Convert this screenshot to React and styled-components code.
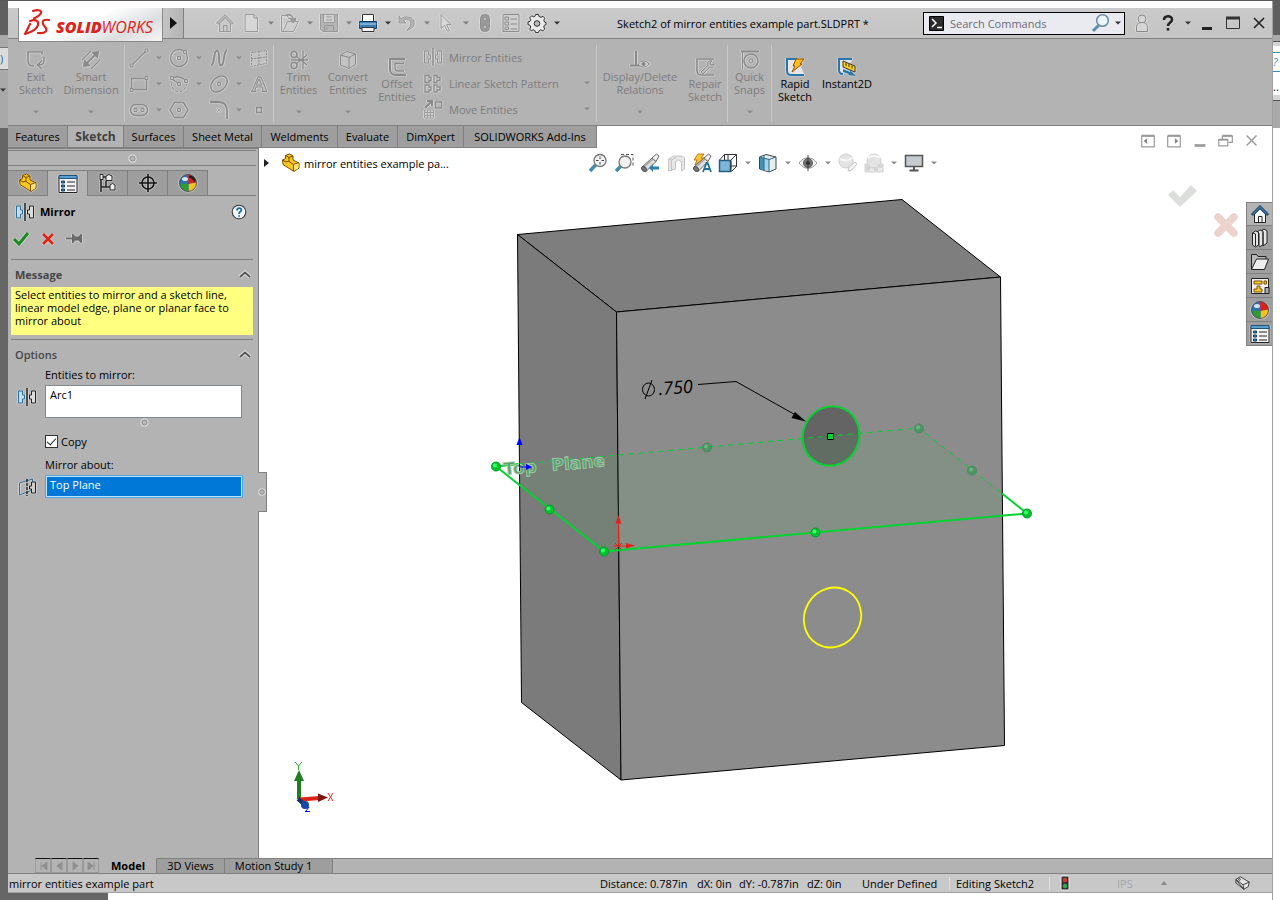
import React from "react";
import styled, { createGlobalStyle } from "styled-components";

const Global = createGlobalStyle`
  *, *::before, *::after { box-sizing: border-box; }
  body { margin: 0; background: #fff; }
  body, button, input, textarea {
    font-family: "Open Sans", "Noto Sans", sans-serif;
    font-size: 11px;
    line-height: 13px;
    color: #000;
  }
  button { border: 0; padding: 0; background: none; }
  svg { display: block; flex: none; }
`;

/* ---------- page frame ---------- */
const Desktop = styled.div`
  display: flex;
  min-height: 100vh;
  border-top: 1px solid #5a5a5a;
`;
const LeftEdge = styled.div`
  width: 8px;
  flex: none;
  display: flex;
  flex-direction: column;
  background: #666;
`;
const RightEdge = styled.div`
  width: 8px;
  flex: none;
  display: flex;
  flex-direction: column;
  overflow: hidden;
  background: #fff;
  border-left: 1px solid #a0a0a0;
`;
const Band = styled.div`
  height: ${(p) => p.$h}px;
  padding-top: ${(p) => p.$pt || 0}px;
  background: ${(p) => p.$bg};
  border-top: ${(p) => (p.$line ? `1px solid ${p.$line}` : "0")};
  color: ${(p) => p.$color || "#000"};
  overflow: hidden;
  flex: none;
`;
const Window = styled.div`
  flex: 1;
  min-width: 0;
  display: flex;
  flex-direction: column;
  padding-top: 7px;
`;

/* ---------- title bar ---------- */
const TitleBar = styled.header`
  display: flex;
  align-items: center;
  height: 31px;
  background: linear-gradient(#cacaca, #c4c4c4);
  border-bottom: 1px solid #808080;
`;
const LogoBox = styled.div`
  position: relative;
  z-index: 1;
  align-self: flex-start;
  width: 145px;
  height: 34px;
  margin-left: 10px;
  background: linear-gradient(155deg, #fff 20%, #fff 45%, #dcdee0 75%, #f4f4f4);
  border: 1px solid #8a8a8a;
  border-top: 0;
`;
const Flyout = styled.button`
  width: 21px;
  align-self: stretch;
  display: flex;
  align-items: center;
  padding-left: 6px;
  background: linear-gradient(90deg, #c4c4c4, #b4b4b4);
  border-right: 1px solid #808080;
`;
const QuickTools = styled.div`
  display: flex;
  align-items: center;
  margin-left: 28px;
`;
const IconButton = styled.button`
  width: 26px;
  height: 26px;
  display: flex;
  align-items: center;
  justify-content: center;
`;
const DropButton = styled.button`
  width: ${(p) => p.$w || 13}px;
  height: 26px;
  display: flex;
  align-items: center;
  justify-content: center;
`;
const DocTitle = styled.h1`
  flex: 1;
  margin: 0;
  font-size: 11px;
  font-weight: 400;
  line-height: 13px;
  text-align: center;
  white-space: nowrap;
`;
const Search = styled.label`
  display: flex;
  align-items: center;
  width: 202px;
  height: 23px;
  margin-right: 4px;
  padding: 0 0 0 5px;
  background: #e9ebf0;
  border: 1px solid #000;
`;
const SearchInput = styled.input`
  flex: 1;
  min-width: 0;
  padding: 0 6px;
  border: 0;
  outline: 0;
  background: none;
  &::placeholder { color: #6b6b74; opacity: 1; }
`;

/* ---------- ribbon ---------- */
const Ribbon = styled.div`
  display: flex;
  height: 87px;
  background: #b3b3b3;
  border-bottom: 1px solid #808080;
`;
const Group = styled.div`
  display: flex;
  margin: 6px 0 3px;
  padding-right: ${(p) => p.$pad || 0}px;
  border-right: ${(p) => (p.$last ? 0 : 1)}px solid #c9c9c9;
`;
const BigButton = styled.button`
  width: ${(p) => p.$w}px;
  display: flex;
  flex-direction: column;
  align-items: center;
  padding-top: ${(p) => (p.$low ? 12 : 5)}px;
  color: ${(p) => (p.$on ? "#000" : "#7d7d7d")};
  white-space: pre-line;
  text-align: center;
`;
const BigDrop = styled.span`
  margin-top: 14px;
`;
const SketchGrid = styled.div`
  display: grid;
  grid-template-columns: 40px 40px 40px 27px;
  grid-auto-rows: 26px;
  padding-left: 1px;
`;
const SketchCell = styled.div`
  display: flex;
  align-items: center;
`;
const RowList = styled.div`
  width: 175px;
`;
const RowButton = styled.button`
  display: flex;
  align-items: center;
  gap: 6px;
  width: 100%;
  height: 26px;
  padding: 0 6px 2px 2px;
  color: #7d7d7d;
  text-align: left;
`;
const RowText = styled.span`
  flex: 1;
`;

/* ---------- command tabs ---------- */
const TabRow = styled.div`
  display: flex;
  height: 22px;
  background: #fff;
`;
const TabStrip = styled.nav`
  display: flex;
  border-bottom: 1px solid #808080;
`;
const Tab = styled.button`
  width: ${(p) => p.$w}px;
  background: ${(p) => (p.$on ? "#b3b3b3" : "#9e9e9e")};
  border-right: 1px solid #808080;
  color: ${(p) => (p.$on ? "#404040" : "#000")};
  font-weight: ${(p) => (p.$on ? 700 : 400)};
  font-size: ${(p) => (p.$on ? 12 : 11)}px;
`;
const DocControls = styled.div`
  display: flex;
  margin: 2px 7px 0 auto;
`;

/* ---------- work area ---------- */
const Work = styled.div`
  flex: 1;
  display: flex;
  min-height: 600px;
`;
const Panel = styled.aside`
  position: relative;
  width: 251px;
  flex: none;
  background: #b3b3b3;
  border-right: 1px solid #808080;
`;
const Grip = styled.div`
  display: flex;
  align-items: center;
  justify-content: center;
  height: 16px;
  margin: 1px 2px 4px 0;
  border: solid #808080;
  border-width: 1px 0;
`;
const PanelTabs = styled.div`
  display: flex;
  margin-right: 2px;
  height: 26px;
  border-bottom: 1px solid #808080;
`;
const PanelTab = styled.button`
  width: 40px;
  height: ${(p) => (p.$on ? 26 : 25)}px;
  display: flex;
  align-items: center;
  justify-content: center;
  background: ${(p) => (p.$on ? "#b3b3b3" : "#9e9e9e")};
  border-top: 1px solid #808080;
  border-right: 1px solid #808080;
`;
const PanelHead = styled.div`
  display: flex;
  align-items: center;
  gap: 5px;
  height: 31px;
  padding: 0 11px 0 7px;
`;
const PanelTitle = styled.h2`
  flex: 1;
  margin: 0;
  font-size: 11px;
  line-height: 13px;
`;
const Actions = styled.div`
  display: flex;
  height: 33px;
  padding-top: 2px;
  margin: 0 5px 0 3px;
  border-bottom: 1px solid #808080;
`;
const ActionButton = styled.button`
  width: 27px;
  height: 20px;
  display: flex;
  justify-content: flex-start;
`;
const Section = styled.section`
  margin: 0 5px 0 3px;
`;
const SectionHead = styled.div`
  display: flex;
  align-items: center;
  justify-content: space-between;
  height: 27px;
  padding: 1px 2px 0 4px;
`;
const SectionTitle = styled.h3`
  margin: 0;
  font-size: 11px;
  line-height: 13px;
  font-weight: ${(p) => (p.$light ? 600 : 700)};
  color: #464646;
`;
const Message = styled.p`
  height: 48px;
  margin: 0 0 4px;
  padding: 1px 4px;
  background: #ffff80;
`;
const Rule = styled.hr`
  margin: 0;
  border: 0;
  border-top: 1px solid #808080;
`;
const Fields = styled.div`
  display: grid;
  grid-template-columns: 32px 198px;
  column-gap: 2px;
  justify-items: start;
  padding-top: 1px;
`;
const FieldLabel = styled.label`
  grid-column: 2;
  height: 17px;
`;
const FieldIcon = styled.div`
  justify-self: center;
  padding-top: 2px;
`;
const Selection = styled.textarea`
  width: 197px;
  height: 33px;
  padding: 2px 4px;
  resize: none;
  outline: 0;
  background: #fff;
  border: 1px solid #828790;
`;
const SelectionGrip = styled.div`
  grid-column: 2;
  justify-self: center;
  height: 17px;
`;
const Check = styled.label`
  grid-column: 2;
  display: flex;
  align-items: center;
  gap: 3px;
  height: 13px;
  margin-bottom: 10px;
`;
const Tick = styled.input`
  appearance: none;
  width: 13px;
  height: 13px;
  margin: 0;
  border: 1px solid #333;
  background: #fff;
  display: grid;
  place-content: center;
  &:checked::before {
    content: "";
    width: 9px;
    height: 5px;
    border: solid #222;
    border-width: 0 0 1px 1px;
    transform: rotate(-48deg);
    margin-top: -2px;
  }
`;
const ActiveSelection = styled.input`
  width: 198px;
  height: 23px;
  padding: 0 4px 4px;
  outline: 0;
  color: #fff;
  background: #0078d7;
  border: 1px solid #4fa8e0;
  box-shadow: inset 0 0 0 1px #bfe0f6;
`;
const PanelHandle = styled.button`
  position: absolute;
  left: 250px;
  top: 324px;
  z-index: 2;
  width: 9px;
  height: 40px;
  display: flex;
  align-items: center;
  justify-content: center;
  background: #b3b3b3;
  border: 1px solid #808080;
  border-left: 0;
`;

const Canvas = styled.main`
  position: relative;
  flex: 1;
  min-width: 0;
  background: #fff;
`;
const CanvasHead = styled.div`
  position: relative;
  z-index: 1;
  display: flex;
  align-items: center;
  height: 30px;
`;
const TreeItem = styled.button`
  display: flex;
  align-items: center;
  width: 326px;
  padding-left: 5px;
  text-align: left;
`;
const TreeText = styled.span`
  padding-left: 3px;
`;
const Expander = styled.span`
  width: 17px;
`;
const Scene = styled.svg`
  position: absolute;
  inset: 0;
  width: 100%;
  height: 100%;
`;
const TaskPane = styled.nav`
  position: absolute;
  right: 0;
  top: 54px;
  width: 26px;
  border: 1px solid #808080;
  border-right: 0;
`;
const TaskButton = styled.button`
  display: flex;
  align-items: center;
  justify-content: center;
  width: 25px;
  height: ${(p) => (p.$on ? 22 : 24)}px;
  background: ${(p) => (p.$on ? "#b3b3b3" : "#9e9e9e")};
  & + & { border-top: 1px solid #808080; }
`;

/* ---------- bottom bars ---------- */
const BottomTabs = styled.div`
  display: flex;
  height: 16px;
  background: #b3b3b3;
  border-bottom: 1px solid #808080;
`;
const NavButtons = styled.div`
  display: flex;
  width: 92px;
  padding-left: 27px;
`;
const NavButton = styled.button`
  width: 16px;
  display: flex;
  align-items: center;
  justify-content: center;
  border: 1px solid #9a9a9a;
  border-top-color: #111;
`;
const ViewTab = styled.button`
  width: ${(p) => p.$w}px;
  background: ${(p) => (p.$on ? "#b3b3b3" : "#9e9e9e")};
  font-weight: ${(p) => (p.$on ? 700 : 400)};
  border-right: 1px solid #808080;
  border-top: 1px solid ${(p) => (p.$on ? "#b3b3b3" : "#808080")};
  padding: 0 ${(p) => p.$pr || 0}px 3px 0;
`;
const TabFill = styled.div`
  flex: 1;
  border-top: 1px solid #808080;
`;
const StatusBar = styled.footer`
  display: flex;
  align-items: center;
  height: 19px;
  background: #c8c8c8;
  border-bottom: 1px solid #a0a0a0;
  white-space: nowrap;
`;
const StatusName = styled.span`
  flex: 1;
  padding-left: 1px;
`;
const StatusCell = styled.span`
  width: ${(p) => p.$w}px;
  padding-left: ${(p) => p.$pl || 0}px;
  border-right: ${(p) => (p.$bar ? 1 : 0)}px solid #dedede;
  color: ${(p) => (p.$dim ? "#a2a6aa" : "#000")};
`;
const Below = styled.div`
  height: 7px;
  background: #fff;
`;
const BelowDark = styled.div`
  width: 100px;
  height: 7px;
  background: #666;
`;

/* ---------- icons ---------- */
const HaloSvg = styled.svg`
  filter: ${(p) =>
    p.$halo
      ? "drop-shadow(1px 0 rgba(255,255,255,.3)) drop-shadow(-1px 0 rgba(255,255,255,.3)) drop-shadow(0 1px rgba(255,255,255,.2))"
      : "none"};
`;
const Ic = ({ children, s = 20, c = "#8a8a8a", halo, w = 1 }) => (
  <HaloSvg $halo={halo} width={s} height={s} viewBox="0 0 20 20" fill="none" stroke={c} strokeWidth={w} aria-hidden="true">
    {children}
  </HaloSvg>
);
const Caret = ({ c = "#7d7d7d" }) => (
  <svg width="6" height="4" viewBox="0 0 6 4" aria-hidden="true">
    <path d="M0 .5h6L3 3.500z" fill={c} />
  </svg>
);
const Ring = ({ s = 9 }) => (
  <svg width={s} height={s} viewBox="0 0 9 9" aria-hidden="true">
    <circle cx="4.500" cy="4.500" r="3.500" fill="#b0b0b0" stroke="#dadada" strokeWidth="1.500" />
    <circle cx="4.500" cy="4.500" r="2.500" fill="#b8b8b8" stroke="#8c8c8c" />
  </svg>
);
const Chevron = () => (
  <svg width="12" height="9" viewBox="0 0 12 9" fill="none" aria-hidden="true">
    <path d="M1 7l5-4.500 5 4.500" stroke="#ddd" strokeWidth="4" />
    <path d="M1 7l5-4.500 5 4.500" stroke="#555" strokeWidth="1.800" />
  </svg>
);
const Home = ({ dim }) => (
  <Ic halo={dim} c={dim ? "#999" : "#222"}>
    <path d="M4.500 10v8.500h11V10L10 4.500z" fill={dim ? "#c9c9c9" : "#f4f4f4"} />
    <path d="M8.500 18.500v-6h3.500v6M2 10.500l8-8 8 8" />
    <path d="M1.500 10L10 1.500l8.500 8.500-1.500 1.500-7-7-7 7z" fill={dim ? "#bbb" : "#3a78ac"} stroke={dim ? "#999" : "#153b5c"} />
  </Ic>
);
const Part = () => (
  <Ic c="#7a4a00" halo>
    <path d="M1.500 7l3-1.500V2.500l4-1.500 3.500 2v4l6 3v5l-5 3.500-11-7z" fill="#f8c81c" />
    <path d="M4.500 2.500L8 4.500v4l4.500 3 5.500-2M8 4.500L12 3M12.500 11.500V18M1.500 7L5 9l3-1" />
    <path d="M13 12l4.500-1.800V15L13 18z" fill="#fbe37a" stroke="none" />
  </Ic>
);
const MirrorIcon = ({ dim }) => (
  <Ic halo c={dim ? "#8e8e8e" : "#222"}>
    <path d="M1.500 4h4v4h2v4h-2v4h-4z" stroke={dim ? "#8e8e8e" : "#2a6f9f"} fill={dim ? "none" : "#c7dbe8"} />
    <path d="M18.500 4h-4v4h-2v4h2v4h4z" fill={dim ? "none" : "#ddd"} />
    <path d="M10 1v18" strokeWidth="1.500" />
  </Ic>
);
const MirrorAbout = () => (
  <Ic halo c="#222">
    <path d="M2.500 6l13-4v11l-13 5z" stroke="#2a6f9f" />
    <path d="M18.500 5h-4v4h-2v3h2v4h4z" fill="#ccc" />
    <path d="M10 2v17" strokeDasharray="3 1" strokeWidth="1.500" />
  </Ic>
);
const PropList = () => (
  <Ic c="#222" halo>
    <path d="M1 2.500h18v16H1z" fill="#f4f4f4" />
    <path d="M1 1.500h18v3H1z" fill="#5a9fce" stroke="#1c567f" />
    <path d="M3.500 7h3v2h-3zM3.500 11h3v2h-3zM3.500 15h3v2h-3z" fill="#3a86bd" stroke="#123d66" />
    <path d="M9 8h8M9 12h8M9 16h8" />
  </Ic>
);
const Ball = ({ mark }) => (
  <Ic c="none" halo>
    <circle cx="10" cy="10" r="8.500" fill="#2e6fb0" />
    <path d="M10 1.500a8.500 8.500 0 0 1 8.500 8l-8 1.500z" fill="#d9231c" />
    <path d="M18.500 9.500a8.500 8.500 0 0 1-8 9V11z" fill="#f4c321" />
    <path d="M1.500 10.500a8.500 8.500 0 0 0 9 8V11z" fill="#2f9a3a" />
    <ellipse cx="7" cy="6" rx="3" ry="2" fill="#cfe3f3" />
    {mark && <path d="M11 3c3-1 6 1 7 5l-2 1c-1-3-3-4-5-4z" fill="#222" />}
    <circle cx="10" cy="10" r="8.500" stroke="#444" strokeWidth=".8" />
  </Ic>
);
const PointSq = ({ x, y }) => <path d={`M${x - 1.5} ${y - 1.5}h3v3h-3z`} fill="#c6c6c6" />;
const Lens = ({ x = 12, y = 8 }) => (
  <>
    <path d={`M${x - 4} ${y + 4}L2 18`} stroke="#3f8fa8" strokeWidth="3.500" />
    <circle cx={x} cy={y} r="6" fill="#f1f1f1" stroke="#777" strokeWidth="1.300" />
  </>
);

const sketchTools = [
  ["Line", 1, <><path d="M3 17L17 3" strokeWidth="1.400" /><PointSq x={2.5} y={17.5} /><PointSq x={17.5} y={2.5} /></>],
  ["Circle", 1, <><circle cx="10" cy="10" r="8.500" strokeWidth="1.400" /><PointSq x={10} y={10} /><PointSq x={16} y={4} /></>],
  ["Spline", 1, <path d="M2 17.500c4 0 2-15 6-15s0 15 4 15 2-15 6-15" strokeWidth="2" />],
  ["Sketch picture plane", 0, <><path d="M2.500 4.500l15-2v13l-15 3z" strokeDasharray="2 1" fill="#c4c4c4" /><path d="M2 11l16-2M10 3v14" strokeDasharray="2 1" /></>],
  ["Rectangle", 1, <><path d="M2.500 4.500h15v11h-15z" strokeWidth="1.500" /><PointSq x={2.5} y={16} /><PointSq x={17.5} y={4} /></>],
  ["Arc", 1, <><path d="M3 4.500c4-3 9-2 14 2" strokeWidth="1.500" /><path d="M2.500 9c0 11 13 12 15 1" strokeDasharray="3 1.500" /><path d="M3 5l7 5" strokeWidth="1.500" /><PointSq x={3} y={4} /><PointSq x={10} y={10} /><PointSq x={17} y={7} /></>],
  ["Ellipse", 1, <><ellipse cx="10" cy="10" rx="9.500" ry="6.500" transform="rotate(-42 10 10)" strokeWidth="1.500" /><PointSq x={10} y={10} /></>],
  ["Text", 0, <path d="M2 17.500h5l-1-1.500 1-3h6l1 3-1 1.500h5L12 3H9L3.500 16zM7.500 11L10 5l2.500 6z" fill="#bdbdbd" />],
  ["Slot", 1, <><rect x="1.500" y="4.500" width="17" height="11" rx="5.500" strokeWidth="1.500" /><PointSq x={6.5} y={10} /><PointSq x={13.5} y={10} /></>],
  ["Polygon", 0, <><path d="M5.500 2.500h9L19 10l-4.500 7.500h-9L1 10z" strokeWidth="1.500" /><PointSq x={10} y={10} /></>],
  ["Fillet", 1, <><path d="M1 2h8c7 0 9 4 9 9v8" strokeWidth="1.800" /><path d="M8 8l4 4m0-4l-4 4" stroke="#a0a0a0" /></>],
  ["Point", 0, <path d="M7.500 7.500h5v5h-5z" fill="#c6c6c6" strokeWidth="1.300" />],
];

const icons = {
  exit: <path d="M16 4.500V2H2v9c0 4 2 5 5 5h1M18 7v4c0 3-2 4-6 4m4-4.500L11.500 15l4.500 4" strokeWidth="1.600" />,
  smart: <><path d="M1 10l9-9M10 19l9-9" strokeWidth="1.400" /><path d="M5 14L15 4" strokeWidth="1.800" /><path d="M2.500 16.500l1-6.500 5.500 5.500zM17.500 1.500l-6.500 1 5.500 5.500z" fill="#8a8a8a" /></>,
  trim: <><circle cx="5" cy="4.500" r="3" strokeWidth="1.600" /><circle cx="5" cy="15.500" r="3" strokeWidth="1.600" /><path d="M7 6l11 9M7 14l11-9M2 10h17M14 1v18" strokeWidth="1.300" /></>,
  convert: <><path d="M2.500 5L9 1.500 17.500 4v10.500L11 18.500 2.500 15z" fill="#c3c3c3" /><path d="M2.500 5L11 7.500 17.500 4M11 7.500v11" /></>,
  offset: <><path d="M18 2H3v10c0 5 2 6 6 6h10" strokeWidth="2" /><path d="M17 6.500H8V11c0 2 1 3 3 3h6" strokeWidth="1.300" /></>,
  relations: <><path d="M6 1v15M0 15.500h12" strokeWidth="2" /><path d="M8 14c3-4 8-4 11 0-3 4-8 4-11 0z" fill="#ccc" /><circle cx="13.500" cy="14" r="1.500" fill="#777" /></>,
  repair: <><path d="M18 3V2H2v11c0 4 1 5 5 5h12" strokeWidth="1.600" /><path d="M6 15l7-7c-1-3 1-5 4-4l-2 2 1 2 3-1c0 4-3 4-4 3l-7 7z" fill="#bbb" /></>,
  snaps: <><path d="M1 1.500h18" strokeWidth="2" /><path d="M2.500 2v17" /><circle cx="11" cy="11" r="7" strokeWidth="1.600" /><circle cx="11" cy="11" r="2" /></>,
};

const Bottle = ({ blue }) => (
  <>
    <path d="M2 14L12 5l4 3.500L6 18.500z" fill="#dedede" stroke="#666" />
    <path d="M12 5l4.500-4 2.500 2-3 5.500z" fill="#f2f2f2" stroke="#666" />
    <path d="M4 14l9-8" stroke="#aaa" strokeWidth="1.500" />
    <ellipse cx="4" cy="16" rx="2" ry="2.800" transform="rotate(-45 4 16)" fill="#777" stroke="#555" />
    {blue && <path d="M9 15l4-4v2.500h6v3h-6V19z" fill="#2f7fae" stroke="none" />}
  </>
);

const headsUp = [
  ["Zoom to fit", 0, <><Lens x={12} y={7.5} /><path d="M12 3.500v8M8 7.500h8" stroke="#444" strokeDasharray="2.500 3" /></>],
  ["Zoom to area", 0, <><path d="M7 1.500h12v12" stroke="#555" strokeDasharray="3 2" /><Lens x={11} y={9} /></>],
  ["Previous view", 0, <Bottle blue />],
  ["Section view", 0, <><path d="M2.500 6l5-3h9l2 2v11l-3 2V9l-3-2-3 2v7l-7 2z" fill="#e6e6e6" stroke="#c4c4c4" /><path d="M2.500 6l3 1v11M5.500 7l5-3" stroke="#c4c4c4" /></>],
  ["Dynamic annotation views", 0, <><Bottle /><path d="M6 1h6l-3 4h3L3 12l2-5H2z" fill="#ffc533" stroke="#a36400" strokeWidth=".8" /><path d="M11 19l3.500-9h1L19 19m-6.500-3h5" stroke="#1f6f9c" strokeWidth="1.800" /></>],
  ["View orientation", 1, <><path d="M1.500 7.500h11v11h-11z" fill="#7db6d8" stroke="#245f86" strokeWidth="1.500" /><path d="M1.500 7l5-5.500h12v12l-5 5M6.500 1.500V7M18.500 1.500l-6 6M10 2v5M13 13h6M13 7.500v11" stroke="#333" /></>],
  ["Display style", 1, <><path d="M1.500 4L8 1.500l10 2.500v12L11 19 1.500 16z" fill="#e6eef3" stroke="#444" /><path d="M2 4.500l4 1v12l-4-1.500z" fill="#3e94b9" stroke="none" /><path d="M6 5.500l5 1v12l-5-1.500z" fill="#a9d3e4" stroke="none" /><path d="M1.500 4L11 6.500 18 4M11 6.500V19M6 2.500V17" stroke="#2b6a88" /></>],
  ["Hide/show items", 1, <><path d="M1 10c5-7 13-7 18 0-5 7-13 7-18 0z" fill="#f3f3f3" stroke="#999" /><circle cx="10" cy="10" r="4.500" fill="#777" stroke="#555" /><circle cx="10" cy="10" r="2" fill="#222" stroke="none" /><path d="M10 2v16" stroke="#444" /></>],
  ["Edit appearance", 0, <><circle cx="8" cy="8" r="7" fill="#e3e3e3" stroke="#cfcfcf" /><path d="M2 6c4 2 9 2 12-1" stroke="#f6f6f6" strokeWidth="2" /><path d="M10 18l1-4 6-5 2 2-5 6z" fill="#f4f4f4" stroke="#c4c4c4" /></>],
  ["Apply scene", 1, <><path d="M1 11h18v8H1z" fill="#e9e9e9" stroke="#cfcfcf" /><circle cx="10" cy="8" r="7" fill="#e3e3e3" stroke="#cfcfcf" /><path d="M4 5c3-3 9-3 12 0" stroke="#f8f8f8" strokeWidth="2" /><path d="M2 12h4v3H2zM10 15h4v3h-4zM6 15H2v3h4zM14 12h4v3h-4z" fill="#d4d4d4" stroke="none" /></>],
  ["View settings", 1, <><path d="M1.500 2.500h17v11h-17z" fill="#c4cacd" stroke="#555" strokeWidth="1.500" /><path d="M10 14v3M5.500 17.500h9" stroke="#555" strokeWidth="2" /></>],
];

const quickTools = [
  ["Home", 0, <Home dim />],
  ["New", 1, <Ic halo c="#999"><path d="M4 1.500h9l3.500 3.500v13.500H4zM13 1.500V5h3.500" fill="#d6d6d6" /></Ic>],
  ["Open", 1, <Ic halo c="#999"><path d="M1.500 2.500h6l1 3h7v3M1.500 2.500v16h12l5-10h-11l-4 9" fill="#cfcfcf" /><path d="M6 2c5-1 7 1 7 5m-3-2l3 4 3-4" strokeWidth="1.800" /></Ic>],
  ["Save", 1, <Ic halo c="#999"><path d="M1.500 1.500h17v17H4l-2.500-2z" fill="#b5b5b5" /><path d="M4.500 1.500h11v8h-11z" fill="#d2d2d2" /><path d="M5.500 12.500h9v6h-9zM7 4h6M7 7h6M8 14v3" /></Ic>],
  ["Print", 1, <Ic halo c="#123f66"><path d="M4.500 1.500h11v7h-11z" fill="#fff" stroke="#333" /><path d="M1.500 8.500h17v7h-17z" fill="#3a7fb5" /><path d="M1.500 11h17" stroke="#bfe0f3" /><path d="M4 14.500h12v4H4z" fill="#f4f4f4" stroke="#333" /></Ic>, "#333"],
  ["Undo", 1, <Ic halo c="#999"><path d="M2 3v7h7L6.500 7.500c4-3 9 0 6.500 6l-3 4c8-2 9-9 5-12-4-2.500-8-2-11 .5z" fill="#b4b4b4" /></Ic>],
  ["Select", 1, <Ic halo c="#999"><path d="M5 1.500v14l3.500-3 3 6 2-1-3-6H15z" fill="#d6d6d6" /></Ic>],
  ["Rebuild", 0, <Ic halo c="#8c8c8c"><rect x="5.500" y="1.500" width="9" height="17" rx="4" fill="#9a9a9a" /><circle cx="10" cy="6" r="2" fill="#bbb" /><circle cx="10" cy="14" r="2" fill="#bbb" /></Ic>],
  ["File properties", 0, <Ic halo c="#8c8c8c"><path d="M2 1.500h16v17H2zM4 4h3.500v3H4zM4 9h3.500v3H4zM4 14h3.500v2.500H4zM9.500 6H16M9.500 11H16M9.500 16H16" fill="#cfcfcf" /></Ic>],
  ["Options", 1, <Ic halo c="#2a2a2a"><path d="M8.500 1.500h3l.5 2 2 .8 2-1 1.800 2-1 1.800.8 2 1.500.5v2l-1.700.7-.6 1.700 1 2-2 1.900-2-1-1.600.7-.7 2h-3l-.6-2-1.700-.8-2 1L2.700 16l1-2-.8-1.700-1.900-.7V9l2-.6.7-1.800-1-1.800 2-2 2 1 1.300-.6z" fill="#e9e9e9" /><circle cx="10" cy="10.500" r="2.800" fill="#bbb" /></Ic>, "#333"],
];

const docIcons = [
  ["Collapse left", <><path d="M3 4.500h14v12H3z" /><path d="M3 4h14" strokeWidth="2" /><path d="M9 7v6l-4-3z" fill="#888" stroke="none" /></>],
  ["Collapse right", <><path d="M3 4.500h14v12H3z" /><path d="M3 4h14" strokeWidth="2" /><path d="M11 7v6l4-3z" fill="#888" stroke="none" /></>],
  ["Minimize document", <path d="M4 15h12" strokeWidth="3" />],
  ["Restore document", <><path d="M2 8.500h10v7H2zM6 8V4.500h11v7h-4" /><path d="M2 8.500h10M6 4h11" strokeWidth="2" /></>],
  ["Close document", <path d="M4 4l11 11M15 4L4 15" strokeWidth="1.500" />],
];

const taskIcons = [
  ["SOLIDWORKS Resources", <Home />],
  ["Design Library", <Ic c="#222"><path d="M2.500 5l3-2 3 1v13l-3 2-3-2zM7 4l3-2 3 1v14l-4 2M11 3l3-2 3 2v12l-4 3M2.500 5l3 1v12M9 5v13M13 4v14" fill="#e4e4e4" /></Ic>],
  ["File Explorer", <Ic c="#222"><path d="M1.500 17V2.500h5l1.500 2h8V7" fill="#bbb" /><path d="M1.500 17.500L6.500 7h12l-4 10.500z" fill="#eee" /></Ic>],
  ["View Palette", <Ic c="#222"><path d="M1.500 2.500h17v15h-17z" fill="#eee" /><path d="M4 5h8v3H4zM14 5h2.500v3H14zM7 10h3v3h2v3H4v-3h3z" fill="#f7c832" stroke="#7a5200" /><path d="M15 11.500h4v6h-4z" fill="#aaa" /></Ic>],
  ["Appearances", <Ball />],
  ["Custom Properties", <PropList />],
];

const Sphere = ({ x, y, faint }) => (
  <g opacity={faint ? 0.6 : 1}>
    <circle cx={x} cy={y} r="4.500" fill={faint ? "#2a9a4e" : "#00c52f"} stroke={faint ? "#2c7f4a" : "#079a26"} />
    <circle cx={x - 1} cy={y - 1} r="2" fill={faint ? "#63c885" : "#3dff6a"} />
  </g>
);

const Model = () => (
  <Scene viewBox="259 148 1013 710" fill="none" role="img" aria-label="Part model with mirrored sketch circle">
    <g stroke="#000" strokeWidth="1" strokeLinejoin="round">
      <path d="M517.500 234.500L902 199.500l98.500 77.500L616.500 312z" fill="#7e7e7e" />
      <path d="M517.500 234.500l99 77.500 4.500 468-99.500-77.500z" fill="#7b7b7b" />
      <path d="M616.500 312l384-35 4 468.500L621 780z" fill="#8c8c8c" />
    </g>
    <ellipse cx="831" cy="436" rx="28" ry="30" transform="rotate(25 831 436)" fill="#646464" />
    <path d="M519 464l400-36 83 65v22l-398 36-85-67z" fill="rgb(70,170,80)" fillOpacity=".11" />
    <ellipse cx="831" cy="436" rx="28" ry="30" transform="rotate(25 831 436)" stroke="#00d42f" strokeWidth="2" />
    <g stroke="#00d42f">
      <path d="M519 464l400-36 84 66" strokeDasharray="5 5" />
      <path d="M519 464l-23 2.500 108 85 423-38-25-20" strokeWidth="2" />
    </g>
    <g fontFamily="DejaVu Sans, sans-serif" fontSize="17" fontWeight="700" fill="#5aa56d" stroke="#a9cdb1" strokeWidth=".8">
      <text x="504" y="475" transform="rotate(-5 504 475)">Top</text>
      <text x="552" y="471" transform="rotate(-5 552 471)">Plane</text>
    </g>
    <path d="M519.500 467v-24M519 467h8" stroke="#00f" strokeDasharray="24 2" />
    <path d="M516.500 445l3-8 3 8zM526 464l6 3-6 3z" fill="#00f" />
    <path d="M618.500 546v-24M614 546h12M615 543l7 7M622 543l-7 7" stroke="#e0231a" />
    <path d="M615.500 523.500l3-8 3 8zM626 543l9 2.500-9 3z" fill="#e0231a" />
    <Sphere x={496} y={466.5} />
    <Sphere x={549.5} y={509.5} />
    <Sphere x={604} y={551.5} />
    <Sphere x={815.5} y={532.5} />
    <Sphere x={1027} y={513.5} />
    <Sphere x={707} y={447.5} faint />
    <Sphere x={919} y={428.5} faint />
    <Sphere x={972} y={470.5} faint />
    <path d="M827.500 433.500h6v6h-6z" fill="#00d42f" stroke="#000" />
    <ellipse cx="832.500" cy="617.500" rx="28" ry="30.500" transform="rotate(30 832.500 617.500)" stroke="#ff0" strokeWidth="1.800" />
    <path d="M698 384.500l38-3 64 36" stroke="#000" />
    <path d="M806 421.500l-14.500-3.500 3.500-6z" fill="#000" />
    <ellipse cx="648.500" cy="389.500" rx="6" ry="6.500" stroke="#000" />
    <path d="M645 399l7-19" stroke="#000" />
    <text x="659" y="395" transform="rotate(-4 659 395)" fontFamily="Open Sans, sans-serif" fontSize="18" fontStyle="italic" fontWeight="500" fill="#000">.750</text>
    <path d="M1168 195l5-5 7 7 11-12 6 6-17 16z" fill="#dcdedc" />
    <path d="M1218 217l16 16M1234 217l-16 16" stroke="#ecd3cc" strokeWidth="7.500" strokeLinecap="round" />
    <path d="M299 799v-20" stroke="#1f7d22" strokeWidth="4" />
    <path d="M294 781l5-11 5 11z" fill="#1f7d22" />
    <path d="M300 799.500l20-1.500" stroke="#dd2414" strokeWidth="4" />
    <path d="M318 793.500l10 4-10 4.500z" fill="#7e150c" />
    <path d="M298 799l7 6" stroke="#12316b" strokeWidth="4" />
    <circle cx="305" cy="805" r="4" fill="#1546a8" />
    <path d="M295 762l3.500 4v4M302 762l-3.500 4" stroke="#2da02f" />
    <path d="M328 793l5 8M333 793l-5 8" stroke="#e0231a" />
    <path d="M305 811.500h5M309 807l-3 4" stroke="#00f" />
  </Scene>
);

const Big = ({ w, low, on, icon, text, drop, children }) => (
  <BigButton type="button" $w={w} $low={low} $on={on}>
    {children || <Ic halo>{icons[icon]}</Ic>}
    <span>{text}</span>
    {drop && <BigDrop><Caret c="#8c8c8c" /></BigDrop>}
  </BigButton>
);

export default function App() {
  return (
    <>
      <Global />
      <Desktop>
        <LeftEdge>
          <Band $h={34} $bg="#5f5f5f" />
          <Band $h={12} $bg="#a9a9a9" />
          <Band $h={22} $pt={4} $bg="#dcdcdc" $line="#777" $color="#2a6592">)</Band>
          <Band $h={59} $pt={18} $bg="#a9a9a9" $line="#777"><Caret c="#333" /></Band>
        </LeftEdge>
        <Window>
          <TitleBar>
            <LogoBox>
              <svg width="143" height="33" viewBox="0 0 143 33" role="img" aria-label="SOLIDWORKS">
                <g fill="none" stroke="#dc241c" strokeWidth="2.200" strokeLinecap="round" strokeLinejoin="round">
                  <path d="M14 3c6-2 9 0 8 2s-4 4-7 5.500" />
                  <path d="M11 13c6-2 9 0 8 4s-6 7-13 9l5-10" />
                  <path d="M30 12c-6-1-7 1-6 4s5 4 3 7-6 2-8 2" />
                </g>
                <text x="37" y="25" fontFamily="Open Sans, sans-serif" fontSize="16" fontStyle="italic" fill="#dc241c">
                  <tspan fontWeight="800">SOLID</tspan>
                  <tspan>WORKS</tspan>
                </text>
              </svg>
            </LogoBox>
            <Flyout type="button" aria-label="Show menu">
              <svg width="9" height="14" viewBox="0 0 9 14"><path d="M1 1v12l7-6z" fill="#111" /></svg>
            </Flyout>
            <QuickTools>
              {quickTools.map(([name, drop, icon, c]) => (
                <React.Fragment key={name}>
                  <IconButton type="button" aria-label={name}>{icon}</IconButton>
                  {drop ? <DropButton type="button" aria-label={`${name} menu`}><Caret c={c} /></DropButton> : null}
                </React.Fragment>
              ))}
            </QuickTools>
            <DocTitle>Sketch2 of mirror entities example part.SLDPRT *</DocTitle>
            <Search>
              <svg width="15" height="15" viewBox="0 0 15 15" fill="none" aria-hidden="true">
                <path d="M.5.500h14v14H.5z" fill="#2b2b2b" stroke="#000" />
                <path d="M3 3l4 4-4 4M8 11.500h5" stroke="#fff" strokeWidth="1.500" />
              </svg>
              <SearchInput type="text" placeholder="Search Commands" aria-label="Search Commands" />
              <Ic><path d="M8 12l-6 6" stroke="#5c8ea8" strokeWidth="3" /><circle cx="11.500" cy="7.500" r="5.800" fill="#eaf4fa" stroke="#6b8da3" strokeWidth="1.500" /></Ic>
              <DropButton type="button" aria-label="Search options"><Caret c="#333" /></DropButton>
            </Search>
            <IconButton type="button" aria-label="Account">
              <Ic c="#8a8a8a" halo><circle cx="10" cy="6" r="4" fill="#d6d6d6" /><path d="M4.500 18.500v-5c0-3 3-4 5.500-4s5.500 1 5.500 4v5z" fill="#d6d6d6" /></Ic>
            </IconButton>
            <IconButton type="button" aria-label="Help">
              <Ic c="#222" w={2.5}><path d="M6 7c0-5 8-5 8-.5 0 3-4 3-4 6.500M10 15v2.500" /></Ic>
            </IconButton>
            <DropButton type="button" aria-label="Help menu"><Caret c="#333" /></DropButton>
            <IconButton type="button" aria-label="Minimize"><Ic c="#222" w={3}><path d="M5 15.500h10" /></Ic></IconButton>
            <IconButton type="button" aria-label="Maximize"><Ic c="#333"><path d="M3.500 5.500h13v10h-13z" /><path d="M3 5h14" strokeWidth="3" /></Ic></IconButton>
            <IconButton type="button" aria-label="Close"><Ic c="#222" w={1.6}><path d="M5 5l10 10M15 5L5 15" /></Ic></IconButton>
          </TitleBar>

          <Ribbon>
            <Group $pad={6}>
              <Big w={56} icon="exit" text={"Exit\nSketch"} drop />
              <Big w={54} icon="smart" text={"Smart\nDimension"} drop />
            </Group>
            <Group>
              <SketchGrid>
                {sketchTools.map(([name, drop, art]) => (
                  <SketchCell key={name}>
                    <IconButton type="button" aria-label={name}><Ic halo>{art}</Ic></IconButton>
                    {drop ? <DropButton type="button" aria-label={`${name} menu`}><Caret c="#8c8c8c" /></DropButton> : null}
                  </SketchCell>
                ))}
              </SketchGrid>
            </Group>
            <Group>
              <Big w={49} icon="trim" text={"Trim\nEntities"} drop />
              <Big w={50} icon="convert" text={"Convert\nEntities"} drop />
              <Big w={48} icon="offset" text={"Offset\nEntities"} low />
              <RowList>
                <RowButton type="button"><MirrorIcon dim /><RowText>Mirror Entities</RowText></RowButton>
                <RowButton type="button">
                  <Ic halo>
                    <path d="M2 2.500h4v2h2v3H6v2H2zM11 2.500h3v2h3v3h-3v2h-3zM2 12h4v2h2v3H6v2H2zM11 12h3v2h3v3h-3v2h-3z" strokeWidth="1.300" />
                  </Ic>
                  <RowText>Linear Sketch Pattern</RowText><Caret c="#8c8c8c" />
                </RowButton>
                <RowButton type="button">
                  <Ic halo>
                    <path d="M2 9l7-7M4 2h5v5" strokeWidth="2" /><path d="M12.500 3h6v6h-6z" strokeWidth="1.500" />
                    <path d="M1.500 11h9v8h-9zM4.500 11v8M7.500 11v8M1.500 13.500h9M1.500 16.500h9" stroke="#a0a0a0" />
                  </Ic>
                  <RowText>Move Entities</RowText><Caret c="#8c8c8c" />
                </RowButton>
              </RowList>
            </Group>
            <Group>
              <Big w={86} icon="relations" text={"Display/Delete\nRelations"} drop />
              <Big w={44} icon="repair" text={"Repair\nSketch"} low />
            </Group>
            <Group><Big w={43} icon="snaps" text={"Quick\nSnaps"} drop /></Group>
            <Group $last>
              <Big w={46} text={"Rapid\nSketch"} low on>
                <Ic halo c="#2a75ab"><path d="M12 2H2v11c0 4 1 5 5 5h12" strokeWidth="2" fill="#e6e6e6" /><path d="M11 2h8l-4 5h2L7 15l3-6H8z" fill="#ffc21c" stroke="#9a4a00" /></Ic>
              </Big>
              <Big w={58} text="Instant2D" low on>
                <Ic halo c="#2a75ab"><path d="M15 2H2v11c0 3 1 4 4 4" strokeWidth="2" fill="#e6e6e6" /><path d="M6 4l12 5v6L6 10z" fill="#ffd024" stroke="#333" /><path d="M9 6v3M12 7v3M15 8.500v3" stroke="#333" /><path d="M6 12l7 3v-2l6 6-8-1 1-1-6-2z" fill="#2a75ab" stroke="none" /></Ic>
              </Big>
            </Group>
          </Ribbon>

          <TabRow>
            <TabStrip>
              <Tab type="button" $w={60}>Features</Tab>
              <Tab type="button" $w={56} $on>Sketch</Tab>
              <Tab type="button" $w={60}>Surfaces</Tab>
              <Tab type="button" $w={78}>Sheet Metal</Tab>
              <Tab type="button" $w={76}>Weldments</Tab>
              <Tab type="button" $w={60}>Evaluate</Tab>
              <Tab type="button" $w={66}>DimXpert</Tab>
              <Tab type="button" $w={133}>SOLIDWORKS Add-Ins</Tab>
            </TabStrip>
            <DocControls>
              {docIcons.map(([name, art]) => (
                <IconButton key={name} type="button" aria-label={name}><Ic s={18} c="#999" w={1.3}>{art}</Ic></IconButton>
              ))}
            </DocControls>
          </TabRow>

          <Work>
            <Panel>
              <Rule />
              <Grip><Ring /></Grip>
              <PanelTabs>
                <PanelTab type="button" aria-label="Feature tree"><Part /></PanelTab>
                <PanelTab type="button" aria-label="Property manager" $on><PropList /></PanelTab>
                <PanelTab type="button" aria-label="Configurations">
                  <Ic c="#222" halo><path d="M3 1v18M3 4h5M3 14h9M8 8v6" strokeWidth="1.500" /><path d="M2 1.500h3v5H2zM8 3l3-1.500 3 1.500v4.500H8zM12 12l2.500-1.500L17 12v5h-5z" fill="#eee" /></Ic>
                </PanelTab>
                <PanelTab type="button" aria-label="DimXpert manager">
                  <Ic c="#111" w={1.6} halo><circle cx="10" cy="10" r="6" /><path d="M10 1v18M1 10h18" /></Ic>
                </PanelTab>
                <PanelTab type="button" aria-label="Display manager"><Ball mark /></PanelTab>
              </PanelTabs>
              <PanelHead>
                <MirrorIcon />
                <PanelTitle>Mirror</PanelTitle>
                <button type="button" aria-label="Help on this command">
                  <Ic s={16} c="#333"><circle cx="10" cy="10" r="8.500" fill="#f2f6f9" strokeWidth="1.300" /><path d="M7.500 8c0-4 5.500-3.500 5.500-.5 0 2-3 2-3 5M10 14v2" stroke="#1f6ba3" strokeWidth="2.200" /></Ic>
                </button>
              </PanelHead>
              <Actions>
                <ActionButton type="button" aria-label="OK"><Ic c="#1d8a1d" w={3} halo><path d="M3 10l5 5L17 4" /></Ic></ActionButton>
                <ActionButton type="button" aria-label="Cancel"><Ic c="#dd2414" w={2.6} halo><path d="M5 5l10 10M15 5L5 15" /></Ic></ActionButton>
                <ActionButton type="button" aria-label="Keep visible"><Ic c="#666" halo><path d="M1 9.500h6" strokeWidth="1.600" /><path d="M7.500 5v9l3-3h3l3 3V5l-3 3h-3z" fill="#6a6a6a" /></Ic></ActionButton>
              </Actions>
              <Section>
                <SectionHead><SectionTitle>Message</SectionTitle><button type="button" aria-label="Collapse Message"><Chevron /></button></SectionHead>
                <Message>Select entities to mirror and a sketch line, linear model edge, plane or planar face to mirror about</Message>
                <Rule />
              </Section>
              <Section>
                <SectionHead><SectionTitle $light>Options</SectionTitle><button type="button" aria-label="Collapse Options"><Chevron /></button></SectionHead>
                <Fields>
                  <FieldLabel htmlFor="entities">Entities to mirror:</FieldLabel>
                  <FieldIcon><MirrorIcon /></FieldIcon>
                  <Selection id="entities" readOnly defaultValue="Arc1" />
                  <SelectionGrip><Ring /></SelectionGrip>
                  <Check><Tick type="checkbox" defaultChecked />Copy</Check>
                  <FieldLabel htmlFor="about">Mirror about:</FieldLabel>
                  <FieldIcon><MirrorAbout /></FieldIcon>
                  <ActiveSelection id="about" type="text" readOnly defaultValue="Top Plane" />
                </Fields>
              </Section>
              <PanelHandle type="button" aria-label="Collapse panel"><Ring s={8} /></PanelHandle>
            </Panel>
            <Canvas>
              <Model />
              <CanvasHead>
                <TreeItem type="button">
                  <Expander><svg width="5" height="8" viewBox="0 0 5 8"><path d="M0 0v8l5-4z" fill="#222" /></svg></Expander>
                  <Part />
                  <TreeText>mirror entities example pa...</TreeText>
                </TreeItem>
                {headsUp.map(([name, drop, art]) => (
                  <React.Fragment key={name}>
                    <IconButton type="button" aria-label={name}><Ic>{art}</Ic></IconButton>
                    {drop ? <DropButton type="button" $w={14} aria-label={`${name} menu`}><Caret c="#8c8c8c" /></DropButton> : null}
                  </React.Fragment>
                ))}
              </CanvasHead>
              <TaskPane>
                {taskIcons.map(([name, icon], i) => (
                  <TaskButton key={name} type="button" aria-label={name} $on={i === 0}>{icon}</TaskButton>
                ))}
              </TaskPane>
            </Canvas>
          </Work>

          <BottomTabs>
            <NavButtons>
              {["M4 2v8M10 2v8L5 6z", "M9 2v8L4 6z", "M4 2v8l5-4z", "M9 2v8M3 2v8l5-4z"].map((d) => (
                <NavButton key={d} type="button" aria-label="Scroll tabs">
                  <svg width="12" height="12" viewBox="0 0 12 12"><path d={d} fill="#8f8f8f" stroke="#8f8f8f" /></svg>
                </NavButton>
              ))}
            </NavButtons>
            <ViewTab type="button" $w={57} $on>Model</ViewTab>
            <ViewTab type="button" $w={68}>3D Views</ViewTab>
            <ViewTab type="button" $w={108} $pr={10}>Motion Study 1</ViewTab>
            <TabFill />
          </BottomTabs>
          <StatusBar>
            <StatusName>mirror entities example part</StatusName>
            <StatusCell $w={97}>Distance: 0.787in</StatusCell>
            <StatusCell $w={42}>dX: 0in</StatusCell>
            <StatusCell $w={68}>dY: -0.787in</StatusCell>
            <StatusCell $w={55}>dZ: 0in</StatusCell>
            <StatusCell $w={88} $bar>Under Defined</StatusCell>
            <StatusCell $w={100} $pl={6} $bar>Editing Sketch2</StatusCell>
            <StatusCell $w={67} $pl={5}>
              <svg width="20" height="16" viewBox="0 0 20 16" aria-label="Rebuild status" role="img">
                <rect x="6" y="1" width="8" height="14" rx="1.500" fill="#333" stroke="#eee" />
                <circle cx="10" cy="5" r="2.200" fill="#d83a2c" /><circle cx="10" cy="11" r="2.200" fill="#2fae4a" />
              </svg>
            </StatusCell>
            <StatusCell $w={44} $dim>IPS</StatusCell>
            <StatusCell $w={73}>
              <svg width="6" height="4" viewBox="0 0 6 4"><path d="M0 4h6L3 0z" fill="#888" /></svg>
            </StatusCell>
            <StatusCell $w={38}>
              <svg width="18" height="16" viewBox="0 0 20 18" fill="none" stroke="#333" role="img" aria-label="Tags">
                <path d="M2 5l5-3 10 6-1 5-5 3z" fill="#e4e4e4" /><path d="M2 5l8 6 7-3M10 11l1 5M2 5v4l9 7" /><circle cx="6" cy="5" r="1" />
              </svg>
            </StatusCell>
          </StatusBar>
          <Below><BelowDark /></Below>
        </Window>
        <RightEdge>
          <Band $h={34} $bg="#5f5f5f" />
          <Band $h={6} $bg="#a9a9a9" />
          <Band $h={5} $bg="#d4d4d4" $line="#555" />
          <Band $h={6} $bg="#fff" />
          <Band $h={19} $pt={2} $bg="#fff" $line="#3c8ac0" $color="#3c8ac0"><i>?c</i></Band>
          <Band $h={24} $pt={8} $bg="#fff" $line="#3c8ac0">..</Band>
          <Band $h={5} $bg="#d4d4d4" />
          <Band $h={28} $bg="#a9a9a9" $line="#555" />
        </RightEdge>
      </Desktop>
    </>
  );
}
